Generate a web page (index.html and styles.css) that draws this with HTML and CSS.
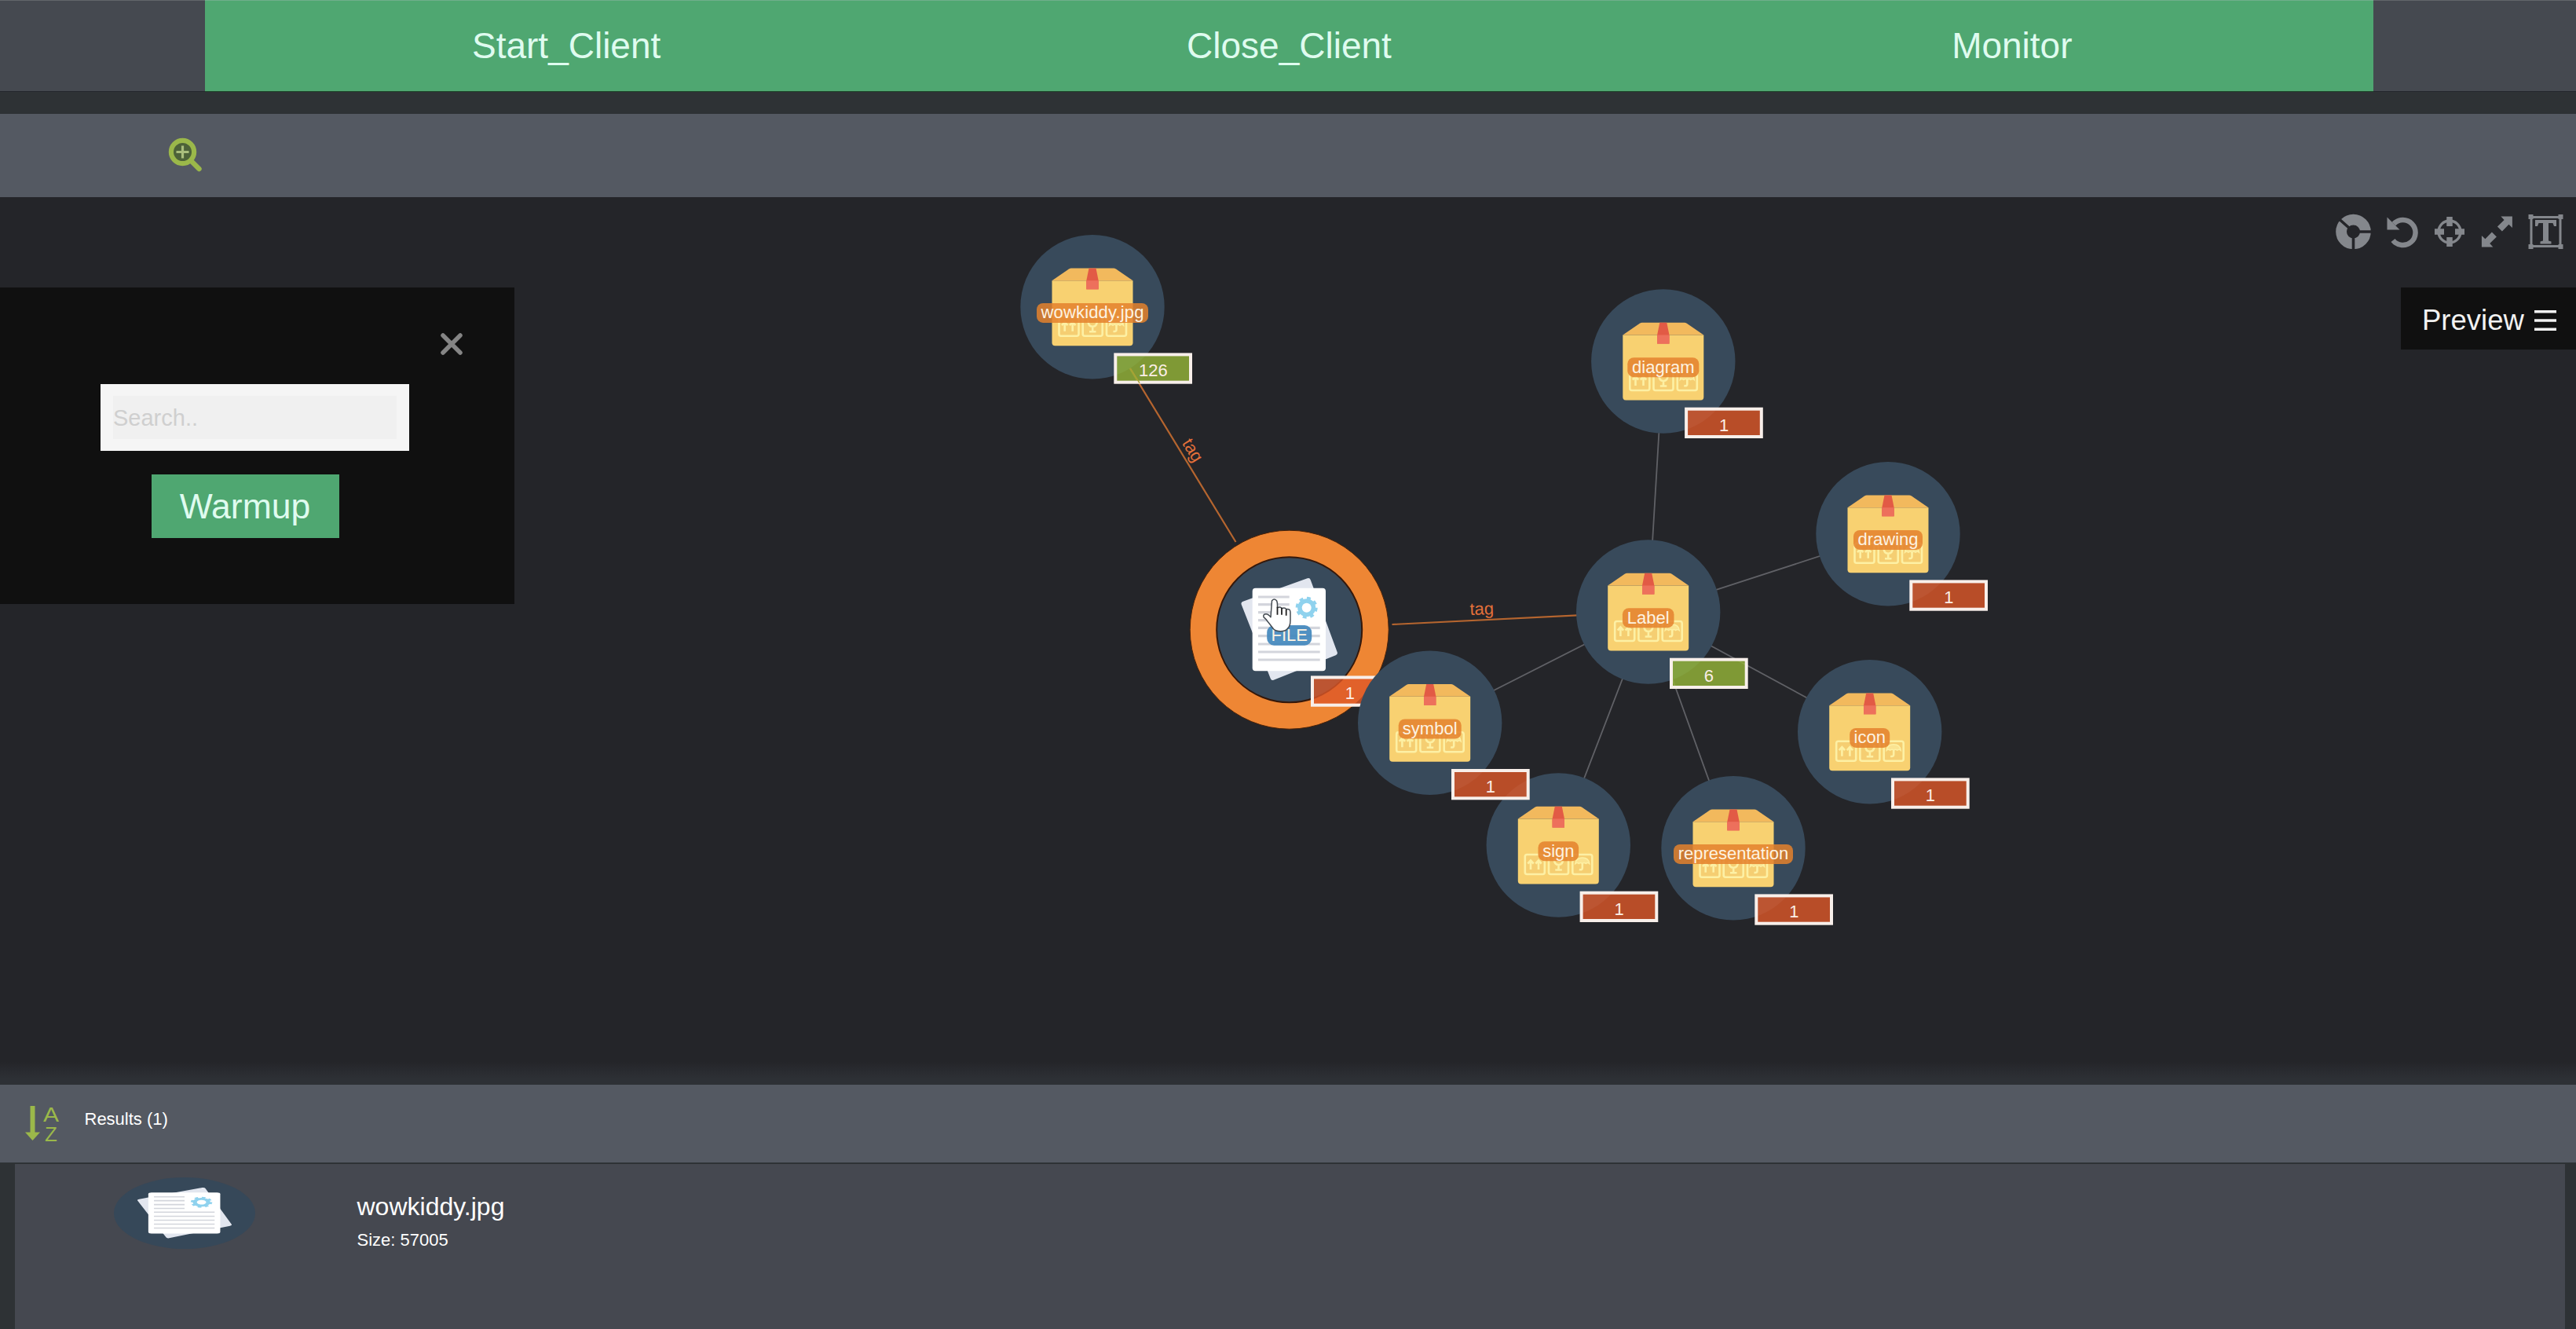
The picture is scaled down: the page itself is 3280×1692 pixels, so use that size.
FILE: index.html
```html
<!DOCTYPE html>
<html lang="en">
<head>
<meta charset="utf-8">
<title>Graph viewer</title>
<link rel="stylesheet" href="styles.css">
</head>
<body>
<header class="menu">
  <button class="menu-item">Start_Client</button>
  <button class="menu-item">Close_Client</button>
  <button class="menu-item">Monitor</button>
</header>
<nav class="toolbar">
  <svg class="zoom-icon" viewBox="0 0 44 44">
    <circle cx="18.500" cy="18.500" r="14.600" fill="#4d6238" stroke="#9bb84a" stroke-width="6.200"/>
    <path d="M30 30.500L39.500 40" stroke="#9bb84a" stroke-width="6.400" stroke-linecap="round"/>
    <path d="M18.500 10.500v16M10.500 18.500h16" stroke="#a9bd7c" stroke-width="3.200"/>
  </svg>
</nav>

<main class="canvas">
  <svg class="graph" viewBox="0 251 3280 1130">
    <defs>
      <g id="box">
        <circle r="91.700" fill="#384a5b"/>
        <path d="M-51.500-33.500V45.500q0 4 4 4H47.500q4 0 4-4V-33.500z" fill="#f8d171"/>
        <path d="M-51.500-33.500L-30-48.300q1.500-1 3-1H27q1.500 0 3 1L51.500-33.500z" fill="#f2b95d"/>
        <path d="M-4.500-49.300h9L7.700-33.500V-22.500H-7.700V-33.500z" fill="#e25a45"/>
        <path d="M-7.700-33.500H7.700V-22.300H-7.700z" fill="#ed705c"/>
        <g fill="#f5ce72" stroke="#fdf0a4" stroke-width="2.600">
          <rect x="-42.500" y="12" width="25" height="25" rx="2.500"/>
          <rect x="-12.300" y="12" width="25" height="25" rx="2.500"/>
          <rect x="18" y="12" width="25" height="25" rx="2.500"/>
        </g>
        <g fill="none" stroke="#fdf0a4" stroke-width="2.600">
          <path d="M-35.300 31V20M-39 23.500l3.700-4 3.700 4M-25.300 31V20M-29 23.500l3.700-4 3.700 4"/>
          <path d="M-5.500 17q0 8 5.700 8T6 17M.2 25v6M-4 31.500H4.500"/>
          <path d="M30.500 23v6q0 3-4 2"/>
        </g>
        <path d="M21.500 23.500q1-7.500 9-7.500t9 7.500q-2-2-4.500 0-2.500-2-4.500 0-2-2-4.500 0-2.500-2-4.500 0z" fill="#fae391" stroke="#fdf0a4" stroke-width="1.500"/>
      </g>
      <g id="paper">
        <path d="M-59-36L23-65.500q3-1 4 2L61 28.500q1 3-2 4L-20 64q-3 1-4-2L-61-32q-1-3 2-4z" fill="#e2e6ef"/>
        <rect x="-47" y="-53" width="93.300" height="105.600" rx="4" fill="#fff"/>
        <path d="M-39.700-41.700H0M-39.700-32H0M-39.700-22H0M-39.700-12H0M-39.700-2.400H39M-39.700 8H39M-39.700 18.300H39M-39.700 28.300H39M-39.700 38.300H39" stroke="#d3d5dc" stroke-width="3.200"/>
        <circle cx="22" cy="-28" r="11.500" fill="#8fd2ee"/>
        <circle cx="22" cy="-28" r="12" fill="none" stroke="#8fd2ee" stroke-width="4" stroke-dasharray="4.700 4.720"/>
        <circle cx="22" cy="-28" r="6" fill="#fff"/>
      </g>
      <g id="badge"><rect x="29.300" y="60.700" width="95.700" height="35.300" stroke="#f8efea" stroke-width="4"/></g>
    </defs>

    <g class="edges">
      <path d="M2098.700 779L2117.800 460M2098.700 779L2404 679.700M2098.700 779L2380.700 931.700M2098.700 779L2207 1079.700M2098.700 779L1984.300 1076M2098.700 779L1820.700 920.300"/>
      <path class="edge-tag" d="M1391 390.700L1573.500 690M1772.500 795L2098.700 779"/>
    </g>
    <text class="tag" transform="translate(1512.500 577) rotate(58.600)">tag</text>
    <text class="tag" transform="translate(1887 782.500) rotate(-2)">tag</text>

    <g transform="translate(1391 390.700)">
      <use href="#box"/><rect class="pill" x="-71" y="-4.800" width="142" height="25" rx="8"/><text class="label" y="14.700" textLength="131">wowkiddy.jpg</text>
      <use href="#badge" class="many"/><path d="M48.500 78.500L60 97" stroke="#a9a135" stroke-width="1.500"/><text class="count" x="77.300" y="88.500">126</text>
    </g>
    <g transform="translate(2117.800 460)">
      <use href="#box"/><rect class="pill" x="-45.500" y="-4.800" width="91" height="25" rx="8"/><text class="label" y="14.700">diagram</text>
      <use href="#badge" class="one"/><text class="count" x="77.300" y="88.500">1</text>
    </g>
    <g transform="translate(2404 679.700)">
      <use href="#box"/><rect class="pill" x="-44" y="-4.800" width="88" height="25" rx="8"/><text class="label" y="14.700">drawing</text>
      <use href="#badge" class="one"/><text class="count" x="77.300" y="88.500">1</text>
    </g>
    <g transform="translate(2098.700 779)">
      <use href="#box"/><rect class="pill" x="-32.800" y="-4.800" width="65.600" height="25" rx="8"/><text class="label" y="14.700">Label</text>
      <use href="#badge" class="many"/><text class="count" x="77.300" y="88.500">6</text>
    </g>
    <g transform="translate(2380.700 931.700)">
      <use href="#box"/><rect class="pill" x="-25.500" y="-4.800" width="51" height="25" rx="8"/><text class="label" y="14.700">icon</text>
      <use href="#badge" class="one"/><text class="count" x="77.300" y="88.500">1</text>
    </g>
    <g transform="translate(2207 1079.700)">
      <use href="#box"/><rect class="pill" x="-76" y="-4.800" width="152" height="25" rx="8"/><text class="label" y="14.700">representation</text>
      <use href="#badge" class="one"/><text class="count" x="77.300" y="88.500">1</text>
    </g>
    <g transform="translate(1641.700 801.700)">
      <circle r="126.500" fill="#ee8634" stroke="#4a2208" stroke-width="1"/>
      <circle r="92.500" fill="#384a5b" stroke="#35180a" stroke-width="2"/>
      <use href="#paper"/>
      <rect x="-28.500" y="-5.700" width="57" height="25.700" rx="9" fill="#4489bd" fill-opacity=".93"/>
      <text class="label" y="14.500">FILE</text>
      <use href="#badge" class="one"/><text class="count" x="77.300" y="88.500">1</text>
      <g transform="translate(-3.200 0)">
        <path d="M-19-37q3-3.500 6 0 1 2 1 5v4q4-2 5.500 1 4-2 6 1 5-1 5 4v10q0 8-4 11Q-2 2-8 2q-6 0-9-3-3-4-7-9-3-4-5.500-6-1-4 3-4 3 0 6 4z" fill="#fff" stroke="#444b52" stroke-width="1.500" stroke-linejoin="round"/>
        <path d="M-12-29v10M-6.500-28v9M-.8-26v8" stroke="#222" stroke-width="1.800"/>
      </g>
    </g>
    <g transform="translate(1984.300 1076)">
      <use href="#box"/><rect class="pill" x="-25.800" y="-4.800" width="51.600" height="25" rx="8"/><text class="label" y="14.700">sign</text>
      <use href="#badge" class="one"/><text class="count" x="77.300" y="88.500">1</text>
    </g>
    <g transform="translate(1820.700 920.300)">
      <use href="#box"/><rect class="pill" x="-40" y="-4.800" width="80" height="25" rx="8"/><text class="label" y="14.700">symbol</text>
      <use href="#badge" class="one"/><text class="count" x="77.300" y="88.500">1</text>
    </g>
  </svg>

  <div class="tools">
    <svg viewBox="-29.500 -26 61 52">
      <circle r="15.400" fill="none" stroke="#84878c" stroke-width="13.800"/>
      <path d="M0 0H25M0 0V25M0 0L-18-16" stroke="#242529" stroke-width="3.600"/>
    </svg>
    <svg viewBox="-31 -26 61 52">
      <path d="M-11-10A16 16 0 1 1-12 11" fill="none" stroke="#84878c" stroke-width="6.500"/>
      <path d="M-19.500-18.500V-2.500H-3.500z" fill="#84878c"/>
    </svg>
    <svg viewBox="-30 -26 61 52">
      <circle r="14" fill="none" stroke="#84878c" stroke-width="3.400"/>
      <path d="M0-19V-7M0 7V19M-19 0H-7M7 0H19" stroke="#84878c" stroke-width="7.500"/>
    </svg>
    <svg viewBox="-29.400 -26 61 52">
      <path d="M19.500-19.500V-5L15-9.200 6.500-.5.500-6.500 9.200-15 5-19.500zM-19.500 19.500V5L-15 9.200-6.500.5-.5 6.500-9.200 15-5 19.500z" fill="#84878c"/>
    </svg>
    <svg viewBox="-30.500 -26 61 52">
      <path d="M-18.500-18.500h37v37h-37z" fill="none" stroke="#84878c" stroke-width="3"/>
      <path d="M-22-22h6v6h-6zM16-22h6v6h-6zM-22 16h6v6h-6zM16 16h6v6h-6z" fill="#84878c"/>
      <path d="M-13.500-15h27v8h-3l-1.500-4H3.500v22.500l3.500 1V15.500H-7V12.500l3.500-1V-11H-9l-1.500 4h-3z" fill="#84878c"/>
    </svg>
  </div>

  <aside class="search-panel">
    <svg class="close" viewBox="0 0 28 28"><path d="M3 3l22 22M25 3L3 25" stroke="#858585" stroke-width="5.500" stroke-linecap="round"/></svg>
    <div class="search-box"><input class="search" type="text" placeholder="Search.."></div>
    <button class="warmup">Warmup</button>
  </aside>

  <button class="preview">Preview
    <svg class="bars" viewBox="0 0 28 28"><path d="M0 2.800h28M0 14h28M0 25.200h28" stroke="#f2f2f2" stroke-width="3.400"/></svg>
  </button>
</main>

<section class="results-bar">
  <svg class="sort" viewBox="0 0 46 64">
    <path d="M10.500 4V40" stroke="#9bb84a" stroke-width="6"/>
    <path d="M1 37.500H20L10.500 48z" fill="#9bb84a"/>
    <text class="sort-letter" x="34" y="23.500" textLength="20" lengthAdjust="spacingAndGlyphs">A</text>
    <text class="sort-letter" x="34" y="49">Z</text>
  </svg>
  <span class="results-title">Results (1)</span>
</section>
<section class="results">
  <svg class="thumb" viewBox="-91.700 -91.700 183.400 183.400" preserveAspectRatio="none">
    <circle r="91.700" fill="#364859"/>
    <use href="#paper"/>
  </svg>
  <div class="result-text">
    <div class="result-name">wowkiddy.jpg</div>
    <div class="result-size">Size: 57005</div>
  </div>
</section>
</body>
</html>
```

FILE: styles.css
```css
* { box-sizing: border-box; }

body {
  margin: 0;
  height: 1692px;
  display: flex;
  flex-direction: column;
  overflow: hidden;
  background: #2e3235;
  font-family: "Liberation Sans", Arial, sans-serif;
}

button {
  border: 0;
  padding: 0;
  font-family: inherit;
}

.menu {
  flex: none;
  height: 117px;
  padding: 0 258px 0 261px;
  display: grid;
  grid-template-columns: repeat(3, 1fr);
  background: #454950;
  border-bottom: 1px solid #23262c;
  box-shadow: inset 0 1px #62666a;
}

.menu-item {
  background: #4fa771;
  color: #dffbef;
  font-size: 46px;
  box-shadow: inset 0 1px #70ae8b, 0 1px #1d4429;
}

.toolbar {
  flex: none;
  height: 106px;
  margin-top: 28px;
  padding: 30px 0 0 214px;
  background: #545962;
}

.zoom-icon {
  display: block;
  width: 44px;
  height: 44px;
}

.canvas {
  position: relative;
  flex: none;
  height: 1130px;
  background: linear-gradient(#242529 1100px, #2d3035 1122px);
}

.graph {
  display: block;
  width: 3280px;
  height: 1130px;
}

.edges { fill: none; stroke: #606166; stroke-width: 1.800; }
.edge-tag { stroke: #b5652f; stroke-width: 2.200; }
.tag { fill: #e3703a; font-size: 22px; text-anchor: middle; }
.pill { fill: #e4812d; fill-opacity: .85; }
.label { fill: #fdf3e2; font-size: 22px; text-anchor: middle; }
.count { fill: #fbeee6; font-size: 22px; text-anchor: middle; }
.one { fill: rgba(221, 88, 40, .8); }
.many { fill: rgba(150, 183, 56, .8); }

.tools {
  position: absolute;
  top: 18px;
  right: 8px;
  display: flex;
}

.tools svg {
  width: 61px;
  height: 52px;
}

.search-panel {
  position: absolute;
  left: 0;
  top: 115px;
  width: 655px;
  height: 403px;
  padding: 58px 0 0 128px;
  display: flex;
  flex-direction: column;
  align-items: flex-start;
  background: #101010;
}

.close {
  width: 28px;
  height: 28px;
  margin-left: 433px;
}

.search-box {
  width: 393px;
  height: 85px;
  margin-top: 37px;
  padding: 15px 16px;
  background: #f5f5f5;
}

.search {
  display: block;
  width: 361px;
  height: 55px;
  padding: 1px 0 0;
  border: 0;
  background: #f0f0f0;
  font: 29px "Liberation Sans", Arial, sans-serif;
}

.search::placeholder { color: #cfcfcf; }

.warmup {
  width: 239px;
  height: 81px;
  margin: 30px 0 0 65px;
  padding-right: 1px;
  background: #4fa771;
  color: #dffbef;
  font-size: 44.500px;
}

.preview {
  position: absolute;
  top: 115px;
  right: 0;
  width: 223px;
  height: 79px;
  padding: 5px 25px 0 27px;
  display: flex;
  align-items: center;
  justify-content: space-between;
  background: #101010;
  color: #f2f2f2;
  font-size: 36.500px;
}

.bars {
  width: 28px;
  height: 28px;
}

.results-bar {
  flex: none;
  height: 99px;
  padding-left: 31px;
  display: flex;
  background: #545962;
}

.sort {
  width: 46px;
  height: 64px;
  margin-top: 23px;
}

.sort-letter {
  fill: #9bb84a;
  font-size: 26px;
  text-anchor: middle;
}

.results-title {
  margin-left: 30.500px;
  color: #fff;
  font-size: 22px;
  line-height: 87px;
}

.results {
  flex: 1;
  margin: 2px 14px 0 19px;
  padding: 17px 0 0 126px;
  display: flex;
  align-items: flex-start;
  background: #454850;
}

.thumb {
  width: 180px;
  height: 91px;
}

.result-text {
  margin: 16px 0 0 129.500px;
  color: #fff;
}

.result-name {
  font-size: 32px;
  line-height: 42px;
}

.result-size {
  margin-top: 2px;
  font-size: 22px;
  line-height: 40px;
}
```
